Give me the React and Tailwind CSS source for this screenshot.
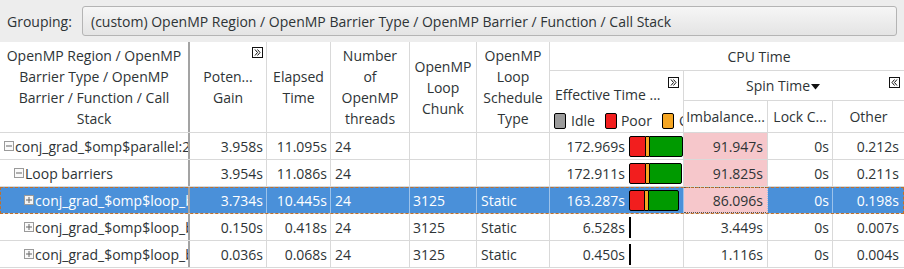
import React from "react";

const Chevrons = ({ left }) => (
    <svg width="11" height="11" viewBox="0 0 11 11" className="block">
        <rect x="0.5" y="0.5" width="10" height="10" fill="#fff" stroke="#111" />
        {left ? (
            <path d="M5.5 2.5 L3 5.5 L5.5 8.5 M8 2.5 L5.5 5.5 L8 8.5" fill="none" stroke="#111" strokeWidth="1" />
        ) : (
            <path d="M3 2.5 L5.5 5.5 L3 8.5 M5.5 2.5 L8 5.5 L5.5 8.5" fill="none" stroke="#111" strokeWidth="1" />
        )}
    </svg>
);

const Expander = ({ open, selected }) => (
    <svg width="10" height="10" viewBox="0 0 10 10" className="shrink-0 mr-[1px]">
        <rect x="0.5" y="0.5" width="9" height="9" fill={selected ? "#f4f4f4" : "#fafafa"} stroke="#9a9a9a" />
        <path d={open ? "M2 5h6" : "M2 5h6 M5 2v6"} stroke="#666" strokeWidth="1" />
    </svg>
);

const LegendBox = ({ color }) => (
    <span className={`inline-block shrink-0 w-[12px] h-[16px] rounded-[2px] border border-black ${color}`} />
);

const Bar = ({ red, green, line }) => {
    if (line) return <div className="w-[2px] h-[21px] bg-black shrink-0" />;
    return (
        <div className="flex h-[21px] shrink-0">
            <div className="bg-[#f21e1e] border border-black rounded-l-[2px]" style={{ width: red }} />
            <div className="w-[3px] bg-[#f5a623] border-y border-black" />
            <div className="bg-[#009a00] border border-black rounded-r-[2px]" style={{ width: green }} />
        </div>
    );
};

const rows = [
    { depth: 0, open: true, name: "conj_grad_$omp$parallel:24@unknown:580:616", gain: "3.958s", elapsed: "11.095s", threads: "24", chunk: "", sched: "", eff: "172.969s", bar: { red: 17, green: 34 }, imb: "91.947s", lock: "0s", other: "0.212s" },
    { depth: 1, open: true, name: "Loop barriers", gain: "3.954s", elapsed: "11.086s", threads: "24", chunk: "", sched: "", eff: "172.911s", bar: { red: 17, green: 33 }, imb: "91.825s", lock: "0s", other: "0.211s" },
    { depth: 2, open: false, selected: true, name: "conj_grad_$omp$loop_barrier_segment", gain: "3.734s", elapsed: "10.445s", threads: "24", chunk: "3125", sched: "Static", eff: "163.287s", bar: { red: 16, green: 31 }, imb: "86.096s", lock: "0s", other: "0.198s" },
    { depth: 2, open: false, name: "conj_grad_$omp$loop_barrier_segment", gain: "0.150s", elapsed: "0.418s", threads: "24", chunk: "3125", sched: "Static", eff: "6.528s", bar: { line: true }, imb: "3.449s", lock: "0s", other: "0.007s" },
    { depth: 2, open: false, name: "conj_grad_$omp$loop_barrier_segment", gain: "0.036s", elapsed: "0.068s", threads: "24", chunk: "3125", sched: "Static", eff: "0.450s", bar: { line: true }, imb: "1.116s", lock: "0s", other: "0.004s" },
];

const App = () => {
    const hcell = "shrink-0 flex items-center justify-center text-center leading-[21px] border-r border-[#d9d9d9] overflow-hidden";

    return (
        <div className="w-[904px] h-[269px] overflow-hidden bg-white text-[14px] text-[#2e3436] font-['Open_Sans',sans-serif]">
            {/* Grouping toolbar */}
            <div className="h-[42px] bg-[#ededed] flex items-center pl-[7px] pr-[7px]">
                <span className="w-[75px]">Grouping:</span>
                <div className="h-[30px] w-[815px] flex items-center pl-[8px] rounded-[3px] border border-[#b4b4b4] bg-gradient-to-b from-[#f6f6f6] to-[#e4e4e4] whitespace-nowrap">
                    (custom) OpenMP Region / OpenMP Barrier Type / OpenMP Barrier / Function / Call Stack
                </div>
            </div>

            {/* Header */}
            <div className="flex h-[91px] border-b border-[#d9d9d9]">
                <div className={`${hcell} w-[190px] border-r-2 border-r-[#a3a3a3] px-[4px]`}>
                    OpenMP Region / OpenMP Barrier Type / OpenMP Barrier / Function / Call Stack
                </div>
                <div className={`${hcell} w-[77px] relative`}>
                    <span>Poten...<br />Gain</span>
                    <div className="absolute top-[5px] right-[3px]"><Chevrons /></div>
                </div>
                <div className={`${hcell} w-[64px]`}>Elapsed<br />Time</div>
                <div className={`${hcell} w-[79px]`}>Number<br />of<br />OpenMP<br />threads</div>
                <div className={`${hcell} w-[67px]`}>OpenMP<br />Loop<br />Chunk</div>
                <div className={`${hcell} w-[73px]`}>OpenMP<br />Loop<br />Schedule<br />Type</div>
                <div className="flex flex-col w-[354px] shrink-0">
                    <div className="h-[29px] flex items-center justify-center pl-[64px] border-b border-[#d9d9d9]">CPU Time</div>
                    <div className="flex flex-1">
                        <div className="w-[134px] shrink-0 border-r border-[#d9d9d9] relative overflow-hidden flex flex-col pl-[4px]">
                            <div className="absolute top-[6px] right-[4px]"><Chevrons /></div>
                            <div className="h-[35px] flex items-end pb-[1px] pl-[1px] whitespace-nowrap">Effective Time ...</div>
                            <div className="flex items-center mt-[4px] whitespace-nowrap">
                                <LegendBox color="bg-[#9b9b9b]" />
                                <span className="ml-[5px] mr-[10px]">Idle</span>
                                <LegendBox color="bg-[#f21e1e]" />
                                <span className="ml-[4px] mr-[10px]">Poor</span>
                                <LegendBox color="bg-[#f5a623]" />
                                <span className="ml-[5px]">Ok</span>
                            </div>
                        </div>
                        <div className="flex flex-col flex-1">
                            <div className="h-[30px] relative flex items-center justify-center pr-[22px] border-b border-[#d9d9d9]">
                                <span>Spin Time</span>
                                <svg width="9" height="6" viewBox="0 0 9 6" className="ml-[1px] mt-[2px]">
                                    <path d="M0 0 H9 L4.5 5.5 Z" fill="#111" />
                                </svg>
                                <div className="absolute top-[6px] right-[4px]"><Chevrons left /></div>
                            </div>
                            <div className="flex flex-1">
                                <div className={`${hcell} w-[84px] whitespace-nowrap`}>Imbalance...</div>
                                <div className={`${hcell} w-[65px] whitespace-nowrap`}>Lock C...</div>
                                <div className={`${hcell} flex-1 border-r-0`}>Other</div>
                            </div>
                        </div>
                    </div>
                </div>
            </div>

            {/* Rows */}
            {rows.map((r, i) => {
                const sel = r.selected;
                const line = sel ? "border-[#9cc2ea]" : "border-[#d9d9d9]";
                const cell = `shrink-0 h-full flex items-center border-r ${line} overflow-hidden whitespace-nowrap`;
                return (
                    <div
                        key={i}
                        className={`flex h-[27px] border-b border-[#d9d9d9] ${sel ? "bg-[#4a90d9] text-white outline-1 outline-dashed outline-[#c0702a] -outline-offset-1" : ""}`}
                    >
                        <div
                            className={`${cell} w-[190px] border-r-2 border-r-[#a3a3a3] ${sel ? "text-white" : ""}`}
                            style={{ paddingLeft: 4 + r.depth * 10 }}
                        >
                            <Expander open={r.open} selected={sel} />
                            <span>{r.name}</span>
                        </div>
                        <div className={`${cell} w-[77px] justify-end pr-[3px]`}>{r.gain}</div>
                        <div className={`${cell} w-[64px] justify-end pr-[3px]`}>{r.elapsed}</div>
                        <div className={`${cell} w-[79px] pl-[4px]`}>{r.threads}</div>
                        <div className={`${cell} w-[67px] pl-[3px]`}>{r.chunk}</div>
                        <div className={`${cell} w-[73px] pl-[4px]`}>{r.sched}</div>
                        <div className={`${cell} w-[134px]`}>
                            <span className="w-[79px] text-right pr-[4px] shrink-0">{r.eff}</span>
                            <Bar {...r.bar} />
                        </div>
                        <div className={`${cell} w-[84px] justify-end pr-[4px] ${i < 3 ? "bg-[#f6c7cb] text-[#2e3436]" : ""} ${sel ? "border-y border-y-[#555] border-dotted" : ""}`}>{r.imb}</div>
                        <div className={`${cell} w-[65px] justify-end pr-[3px]`}>{r.lock}</div>
                        <div className={`${cell} flex-1 justify-end pr-[5px] border-r-0`}>{r.other}</div>
                    </div>
                );
            })}
        </div>
    );
};

export default App;
